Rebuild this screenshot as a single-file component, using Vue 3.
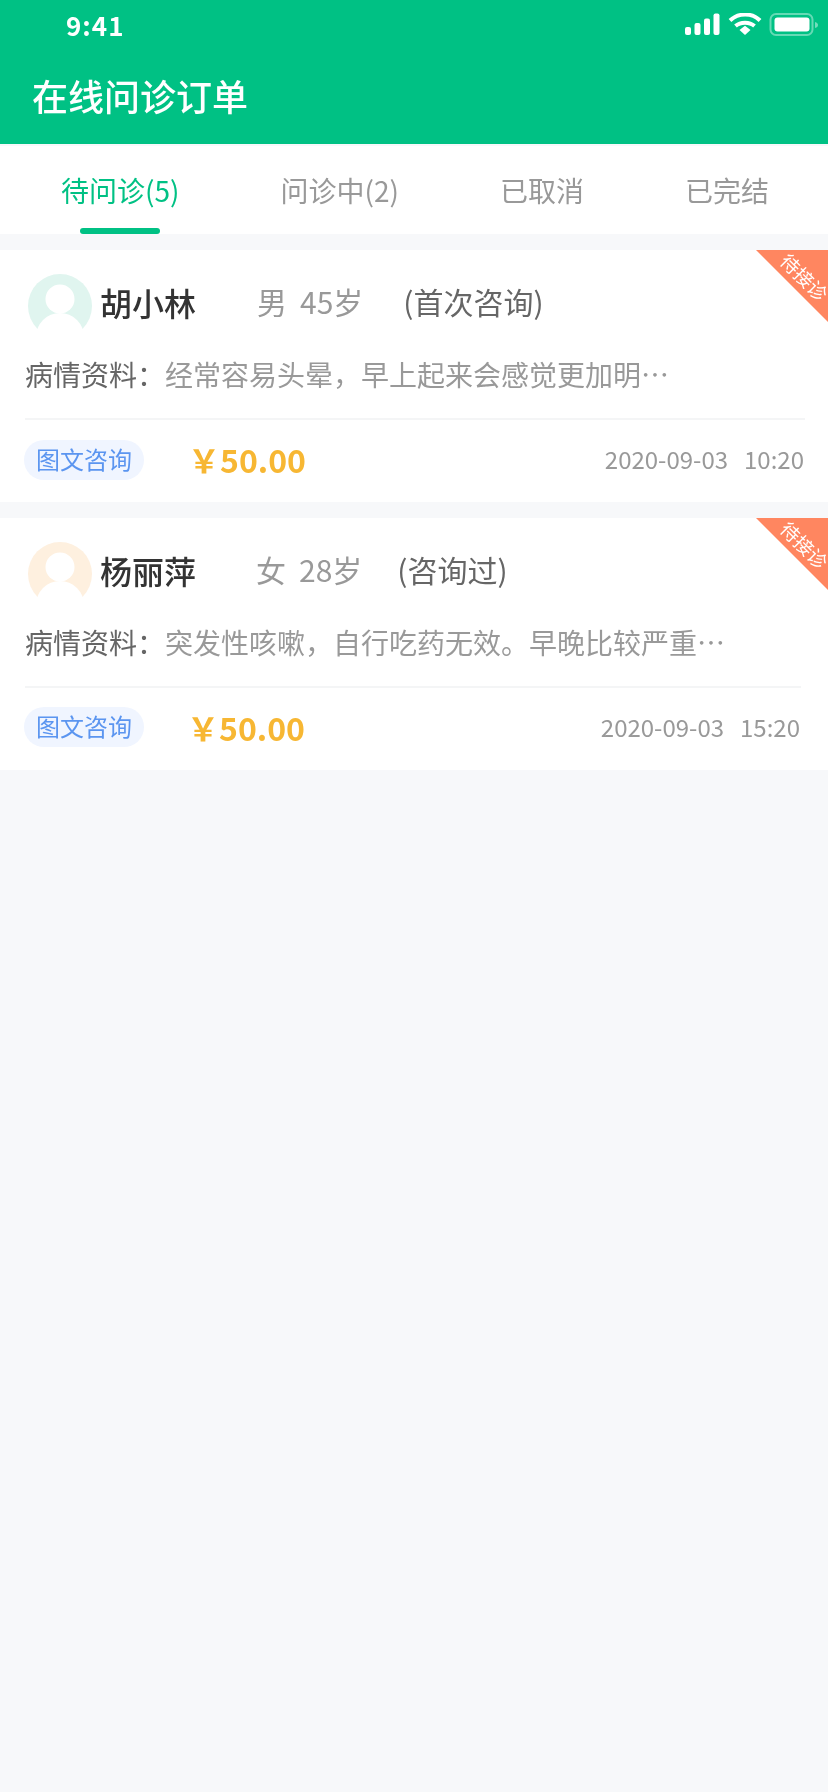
<template>
  <div class="page">
    <header class="head">
      <div class="status">
        <span class="clock">9:41</span>
        <svg class="status-icons" width="134" height="24" viewBox="0 0 134 24">
          <rect x="0" y="14" width="6" height="8" rx="2" fill="#fff" />
          <rect x="9.5" y="10" width="6" height="12" rx="2" fill="#fff" />
          <rect x="19" y="5.5" width="6" height="16.5" rx="2" fill="#fff" />
          <rect x="28.5" y="0.5" width="6" height="21.5" rx="2" fill="#fff" />
          <path d="M45 7.5C53.5 -0.5 67 -0.5 75 7.5" fill="none" stroke="#fff" stroke-width="4" />
          <path d="M50.5 13C55.5 8.5 64.5 8.5 69.5 13" fill="none" stroke="#fff" stroke-width="4" />
          <path d="M54.5 17L60 12.8L65.5 17L60 22Z" fill="#fff" />
          <rect x="85.5" y="1" width="42" height="21" rx="5.5" fill="none" stroke="#fff" stroke-opacity="0.4" stroke-width="2" />
          <rect x="89.5" y="4.5" width="35" height="14" rx="3" fill="#fff" />
          <path d="M130 9V15C132 14.5 133 13.5 133 12C133 10.5 132 9.5 130 9Z" fill="#fff" fill-opacity="0.45" />
        </svg>
      </div>
      <h1 class="title">在线问诊订单</h1>
    </header>

    <nav class="tabs">
      <div v-for="tab in tabs" :key="tab.label" class="tab" :class="{ on: tab.on }">{{ tab.label }}</div>
    </nav>

    <section v-for="order in orders" :key="order.name" class="card" :class="order.cls">
      <div class="ribbon"><span>待接诊</span></div>
      <div class="who">
        <svg class="avatar" width="64" height="64" viewBox="0 0 64 64">
          <circle cx="32" cy="32" r="32" :fill="order.tint" />
          <circle cx="32" cy="25" r="14.5" fill="#fff" />
          <circle cx="32" cy="63" r="24" fill="#fff" />
          <rect x="0" y="55" width="64" height="9" fill="#fff" />
        </svg>
        <span class="name">{{ order.name }}</span>
        <span class="sex">{{ order.sex }}</span>
        <span class="age">{{ order.age }}</span>
        <span class="kind">{{ order.kind }}</span>
      </div>
      <p class="desc"><span class="desc-label">病情资料：</span>{{ order.desc }}</p>
      <div class="foot">
        <span class="tag">图文咨询</span>
        <span class="price"><i>￥</i>50.00</span>
        <span class="when"><span>2020-09-03</span><span>{{ order.time }}</span></span>
      </div>
    </section>
  </div>
</template>

<script setup>
const tabs = [
  { label: '待问诊(5)', on: true },
  { label: '问诊中(2)' },
  { label: '已取消' },
  { label: '已完结' }
]

const orders = [
  {
    name: '胡小林',
    sex: '男',
    age: '45岁',
    kind: '(首次咨询)',
    desc: '经常容易头晕，早上起来会感觉更加明…',
    time: '10:20',
    tint: '#e0f5ef',
    cls: ''
  },
  {
    name: '杨丽萍',
    sex: '女',
    age: '28岁',
    kind: '(咨询过)',
    desc: '突发性咳嗽，自行吃药无效。早晚比较严重…',
    time: '15:20',
    tint: '#fef0df',
    cls: 'card-alt'
  }
]
</script>

<style>
html,
body {
  margin: 0;
  background: #f7f8fa;
}
</style>

<style scoped>
.page {
  min-height: 1792px;
  background: #f7f8fa;
  font-family: "Noto Sans CJK SC", "Noto Sans", sans-serif;
  will-change: transform;
}
.head {
  height: 144px;
  background: #00c184;
  color: #fff;
  margin-bottom: 2px;
}
.status {
  height: 50px;
  padding-left: 66px;
  padding-right: 9px;
  display: flex;
  justify-content: space-between;
  align-items: flex-start;
}
.clock {
  margin-top: 7px;
  font-size: 26px;
  line-height: 36px;
  font-weight: 700;
  letter-spacing: 1px;
}
.status-icons {
  margin-top: 13px;
}
.title {
  margin: 0;
  padding-left: 32px;
  font-size: 36px;
  line-height: 48px;
  font-weight: 500;
  padding-top: 21px;
}
.tabs {
  height: 88px;
  background: #fff;
  display: flex;
  gap: 101px;
  padding-left: 61px;
  margin-bottom: 16px;
}
.tab {
  position: relative;
  font-size: 28px;
  line-height: 40px;
  padding-top: 24px;
  color: #999;
}
.tab.on {
  color: #00c184;
}
.tab.on::after {
  content: "";
  position: absolute;
  left: 19px;
  right: 19px;
  top: 82px;
  height: 6px;
  border-radius: 3px;
  background: #00c184;
}
.card {
  position: relative;
  height: 252px;
  background: #fff;
  margin-bottom: 16px;
  overflow: hidden;
}
.ribbon {
  position: absolute;
  top: 0;
  right: 0;
  width: 72px;
  height: 72px;
  background: #ff8660;
  clip-path: polygon(0 0, 100% 0, 100% 100%);
}
.ribbon span {
  position: absolute;
  left: 20px;
  top: 17px;
  width: 57px;
  font-size: 19px;
  line-height: 20px;
  text-align: center;
  color: #fff;
  transform: rotate(45deg);
  white-space: nowrap;
}
.who {
  display: flex;
  align-items: center;
  height: 64px;
  padding-top: 24px;
  padding-left: 28px;
}
.avatar {
  flex: none;
}
.name {
  margin-left: 8px;
  font-size: 32px;
  line-height: 44px;
  font-weight: 500;
  color: #333;
  margin-top: -9px;
}
.sex,
.age,
.kind {
  font-size: 30px;
  line-height: 44px;
  margin-top: -10px;
  color: #999;
}
.sex {
  margin-left: 61px;
}
.age {
  margin-left: 13px;
}
.kind {
  margin-left: 40px;
  color: #666;
}
.desc {
  margin: 0;
  padding: 10px 24px 0 25px;
  font-size: 28px;
  line-height: 52px;
  height: 52px;
  color: #999;
  white-space: nowrap;
}
.desc-label {
  color: #666;
}
.foot {
  margin: 18px 23px 0 25px;
  border-top: 2px solid #f4f5f6;
  display: flex;
  align-items: center;
  height: 78px;
}
.tag {
  margin-left: -1px;
  margin-top: 2px;
  width: 120px;
  height: 40px;
  border-radius: 20px;
  background: #f0f5ff;
  color: #5b95f0;
  font-size: 24px;
  line-height: 38px;
  text-align: center;
}
.price {
  margin-left: 44px;
  font-size: 32px;
  line-height: 44px;
  font-weight: 700;
  color: #f7b733;
  display: flex;
  align-items: baseline;
}
.price i {
  font-style: normal;
}
.when {
  margin-left: auto;
  display: flex;
  gap: 16px;
  font-size: 24px;
  line-height: 36px;
  color: #999;
  margin-right: 1px;
}
.card-alt .sex {
  margin-left: 60px;
}
.card-alt .kind {
  margin-left: 35px;
}
.card-alt .foot {
  margin-right: 27px;
}
.card-alt .tag {
  margin-top: 0;
}
.card-alt .price {
  margin-left: 43px;
}
</style>
